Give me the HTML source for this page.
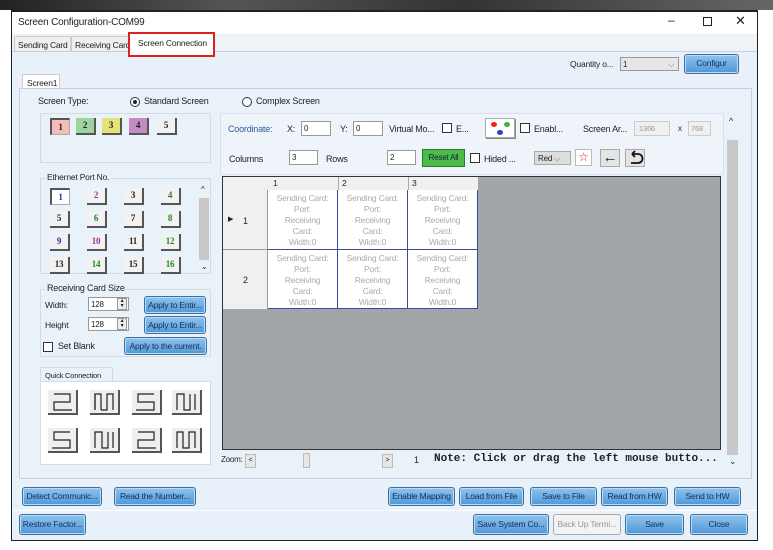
<!DOCTYPE html>
<html><head><meta charset="utf-8"><style>
*{box-sizing:border-box;margin:0;padding:0}
body{width:773px;height:550px;background:#fff;font-family:"Liberation Sans",sans-serif;font-size:9px;color:#222;position:relative;overflow:hidden;letter-spacing:-0.2px}
.a{position:absolute}
.win{left:11px;top:10px;width:747px;height:531px;border:1px solid #222;border-top:2px solid #222;background:#e8f1f9}
.btn{position:absolute;height:19px;border:1px solid #3f6f9f;border-radius:3px;background:linear-gradient(#8fc3ee,#4f97d8);color:#12305a;font-size:8.5px;text-align:center;line-height:17px;white-space:nowrap;overflow:hidden;box-shadow:inset 0 0 0 1px #b8dcf7}
.box{position:absolute;border:1px solid #d3dbe3;background:#eaf2f9}
.nb{position:absolute;width:20px;height:17px;background:#f2f2f2;border-right:2px solid #555;border-bottom:2px solid #555;font:bold 9px "Liberation Serif",serif;text-align:center;line-height:15px}
.inp{position:absolute;height:15px;background:#fff;border:1px solid #999;font-size:8px;padding-left:2px;line-height:13px}
.cell{position:absolute;width:70px;height:60px;background:#fff;color:#aaa;font-size:8.5px;text-align:center;line-height:11px;padding-top:3px;border-right:1px solid #3a4aa0;border-bottom:1px solid #3a4aa0}
.chk{position:absolute;width:10px;height:10px;border:1px solid #333;background:#fff}
</style></head><body>
<div class="a" style="left:0;top:0;width:773px;height:10px;background:linear-gradient(90deg,#222,#555 30%,#333 60%,#666)"></div>
<div class="a win"></div>
<div class="a" style="left:12px;top:12px;width:745px;height:22px;background:#fff"></div>
<div class="a" style="left:18px;top:17px;font-size:10px">Screen Configuration-COM99</div>
<div class="a" style="left:668px;top:13px;font-size:12px">–</div>
<div class="a" style="left:703px;top:17px;width:9px;height:9px;border:1px solid #222"></div>
<div class="a" style="left:735px;top:13px;font-size:13px">✕</div>
<div class="a" style="left:12px;top:35px;width:745px;height:17px;background:#eef3f8;border-bottom:1px solid #ccd"></div>
<div class="a" style="left:14px;top:36px;width:57px;height:16px;border:1px solid #ccc;background:#f0f0f0;font-size:8.5px;padding:3px 0 0 3px">Sending Card</div>
<div class="a" style="left:71px;top:36px;width:58px;height:16px;border:1px solid #ccc;background:#f0f0f0;font-size:8.5px;padding:3px 0 0 3px;overflow:hidden;white-space:nowrap">Receiving Card</div>
<div class="a" style="left:128px;top:32px;width:87px;height:25px;border:2px solid #e02020;background:#fff;font-size:8.5px;padding:4px 0 0 8px">Screen Connection</div>
<div class="a" style="left:570px;top:59px;font-size:8.5px">Quantity o...</div>
<div class="inp" style="left:620px;top:57px;width:59px;height:14px;background:#e6e6e6">1<span style="position:absolute;right:4px;color:#777">⌵</span></div>
<div class="btn" style="left:684px;top:54px;width:55px;height:20px">Configur</div>
<div class="a" style="left:22px;top:74px;width:38px;height:15px;background:#fff;border:1px solid #ccd;border-bottom:none;font-size:8.5px;padding:3px 0 0 4px">Screen1</div>
<div class="a" style="left:19px;top:88px;width:733px;height:391px;border:1px solid #ccd;background:#eaf2f9"></div>
<div class="a" style="left:38px;top:96px;font-size:9px">Screen Type:</div>
<div class="a" style="left:130px;top:97px;width:10px;height:10px;border:1px solid #333;border-radius:50%;background:#fff"><div class="a" style="left:2px;top:2px;width:4px;height:4px;border-radius:50%;background:#222"></div></div>
<div class="a" style="left:144px;top:96px;font-size:9px">Standard Screen</div>
<div class="a" style="left:242px;top:97px;width:10px;height:10px;border:1px solid #333;border-radius:50%;background:#fff"></div>
<div class="a" style="left:256px;top:96px;font-size:9px">Complex Screen</div>
<div class="box" style="left:40px;top:113px;width:171px;height:50px"></div>
<div class="nb" style="left:50px;top:118px;background:#f6bcbc;border-left:2px solid #555;border-top:2px solid #555;border-right:1px solid #aaa;border-bottom:1px solid #aaa">1</div>
<div class="nb" style="left:76px;top:118px;background:#9dd49d">2</div>
<div class="nb" style="left:102px;top:118px;background:#e6e27a">3</div>
<div class="nb" style="left:129px;top:118px;background:#c48ac4">4</div>
<div class="nb" style="left:157px;top:118px;background:#eef2f4">5</div>
<div class="box" style="left:40px;top:178px;width:171px;height:96px"></div>
<div class="a" style="left:45px;top:172px;background:#eaf2f9;padding:0 2px;font-size:8.5px">Ethernet Port No.</div>
<div class="nb" style="left:50px;top:188px;background:#fff;color:#33a;border-left:2px solid #555;border-top:2px solid #555;border-right:1px solid #aaa;border-bottom:1px solid #aaa">1</div>
<div class="nb" style="left:87px;top:188px;color:#939">2</div>
<div class="nb" style="left:124px;top:188px">3</div>
<div class="nb" style="left:161px;top:188px;color:#282">4</div>
<div class="nb" style="left:50px;top:211px">5</div>
<div class="nb" style="left:87px;top:211px;color:#282">6</div>
<div class="nb" style="left:124px;top:211px">7</div>
<div class="nb" style="left:161px;top:211px;color:#282">8</div>
<div class="nb" style="left:50px;top:234px;color:#33a">9</div>
<div class="nb" style="left:87px;top:234px;color:#939">10</div>
<div class="nb" style="left:124px;top:234px">11</div>
<div class="nb" style="left:161px;top:234px;color:#282">12</div>
<div class="nb" style="left:50px;top:257px">13</div>
<div class="nb" style="left:87px;top:257px;color:#282">14</div>
<div class="nb" style="left:124px;top:257px">15</div>
<div class="nb" style="left:161px;top:257px;color:#282">16</div>
<div class="a" style="left:199px;top:198px;width:10px;height:62px;background:#c8c8c8"></div>
<div class="a" style="left:201px;top:185px;font-size:8px">^</div>
<div class="a" style="left:201px;top:262px;font-size:8px">⌄</div>
<div class="box" style="left:40px;top:289px;width:171px;height:68px"></div>
<div class="a" style="left:45px;top:283px;background:#eaf2f9;padding:0 2px;font-size:9px">Receiving Card Size</div>
<div class="a" style="left:45px;top:300px;font-size:8.5px">Width:</div>
<div class="a" style="left:45px;top:320px;font-size:8.5px">Height</div>
<div class="inp" style="left:88px;top:297px;width:41px;height:14px">128</div>
<div class="inp" style="left:88px;top:317px;width:41px;height:14px">128</div>
<div class="a" style="left:117px;top:298px;width:10px;height:12px;background:#eee;border:1px solid #999;font-size:6px;text-align:center;line-height:5px">▴<br>▾</div>
<div class="a" style="left:117px;top:318px;width:10px;height:12px;background:#eee;border:1px solid #999;font-size:6px;text-align:center;line-height:5px">▴<br>▾</div>
<div class="btn" style="left:144px;top:296px;width:62px;height:18px;line-height:16px">Apply to Entir...</div>
<div class="btn" style="left:144px;top:316px;width:62px;height:18px;line-height:16px">Apply to Entir...</div>
<div class="chk" style="left:43px;top:342px"></div>
<div class="a" style="left:58px;top:341px;font-size:9px">Set Blank</div>
<div class="btn" style="left:124px;top:337px;width:83px;height:18px;line-height:16px">Apply to the current.</div>
<div class="a" style="left:40px;top:367px;width:73px;height:14px;background:#eaf2f9;border:1px solid #d3dbe3;border-bottom:none;font-size:7.5px;padding:3px 0 0 4px">Quick Connection</div>
<div class="a" style="left:40px;top:381px;width:171px;height:84px;background:#fff;border:1px solid #d3dbe3"></div>
<svg class="a" style="left:48px;top:390px" width="160" height="70" viewBox="0 0 160 70" fill="none" stroke="#222" stroke-width="1.2">
<defs><g id="bg"><rect x="0" y="0" width="30" height="24" fill="#eee" stroke="none"/><path d="M29 0V24H0" stroke="#555" stroke-width="2"/></g></defs>
<g><use href="#bg"/><path d="M6 4H22V12H6V20H24"/></g>
<g transform="translate(42,0)"><use href="#bg"/><path d="M5 20V4H11V20M11 20H17V4H23V20"/><path d="M5 4V20"/></g>
<g transform="translate(84,0)"><use href="#bg"/><path d="M22 4H6V12H22V20H4"/></g>
<g transform="translate(124,0)"><use href="#bg"/><path d="M5 20V4H12V20H18V4M23 4V20"/></g>
<g transform="translate(0,38)"><use href="#bg"/><path d="M22 4H6V12H22V20H4"/></g>
<g transform="translate(42,38)"><use href="#bg"/><path d="M5 20V4H12V20H18V4M23 4V20"/></g>
<g transform="translate(84,38)"><use href="#bg"/><path d="M6 4H22V12H6V20H24"/></g>
<g transform="translate(124,38)"><use href="#bg"/><path d="M5 20V4H11V20H17V4H23V20"/></g>
</svg>
<div class="a" style="left:220px;top:113px;width:504px;height:62px;background:#eef4fa;border:1px solid #dde"></div>
<div class="a" style="left:228px;top:124px;font-size:9px;color:#2a5d9a">Coordinate:</div>
<div class="a" style="left:287px;top:124px;font-size:9px">X:</div>
<div class="inp" style="left:301px;top:121px;width:30px">0</div>
<div class="a" style="left:340px;top:124px;font-size:9px">Y:</div>
<div class="inp" style="left:353px;top:121px;width:30px">0</div>
<div class="a" style="left:389px;top:124px;font-size:9px">Virtual Mo...</div>
<div class="chk" style="left:442px;top:123px"></div>
<div class="a" style="left:456px;top:124px;font-size:9px">E...</div>
<div class="a" style="left:485px;top:118px;width:30px;height:20px;background:#fff;border:1px solid #aaa;box-shadow:1px 1px 0 #888"><div class="a" style="left:5px;top:3px;width:6px;height:5px;border-radius:50%;background:#e22"></div><div class="a" style="left:18px;top:3px;width:6px;height:5px;border-radius:50%;background:#3b3"></div><div class="a" style="left:11px;top:11px;width:6px;height:5px;border-radius:50%;background:#24b"></div></div>
<div class="chk" style="left:520px;top:123px"></div>
<div class="a" style="left:534px;top:124px;font-size:9px">Enabl...</div>
<div class="a" style="left:583px;top:124px;font-size:9px">Screen Ar...</div>
<div class="inp" style="left:634px;top:121px;width:36px;background:#f0f0f0;color:#999;border-color:#ccc;font-size:7.5px;padding-left:4px">1366</div>
<div class="a" style="left:678px;top:124px;font-size:8px">x</div>
<div class="inp" style="left:688px;top:121px;width:23px;background:#f0f0f0;color:#999;border-color:#ccc;font-size:7.5px">768</div>
<div class="a" style="left:229px;top:154px;font-size:9px">Columns</div>
<div class="inp" style="left:289px;top:150px;width:29px">3</div>
<div class="a" style="left:326px;top:154px;font-size:9px">Rows</div>
<div class="inp" style="left:387px;top:150px;width:29px">2</div>
<div class="a" style="left:422px;top:149px;width:43px;height:18px;background:#4cbb4c;border:1px solid #2a7a2a;font-size:8px;text-align:center;line-height:16px;color:#123">Reset All</div>
<div class="chk" style="left:470px;top:153px"></div>
<div class="a" style="left:484px;top:154px;font-size:9px">Hided ...</div>
<div class="a" style="left:534px;top:151px;width:37px;height:14px;background:#ddd;border:1px solid #aaa;font-size:8px;padding:2px 0 0 3px">Red <span style="color:#777">⌵</span></div>
<div class="a" style="left:575px;top:149px;width:17px;height:17px;background:#fff;border:1px solid #bbb;color:#d22;font-size:12px;text-align:center;line-height:15px">☆</div>
<div class="a" style="left:600px;top:149px;width:20px;height:18px;background:#e4e4e4;border:1px solid #aaa;font-size:15px;text-align:center;line-height:15px">←</div>
<div class="a" style="left:625px;top:149px;width:20px;height:18px;background:#e4e4e4;border:1px solid #aaa"><svg width="18" height="16"><path d="M6 4H12A4 4 0 0 1 12 13H5M6 4l3-3M6 4l3 3" stroke="#111" stroke-width="1.8" fill="none"/></svg></div>
<div class="a" style="left:222px;top:176px;width:499px;height:274px;background:#a3a6a8;border:1px solid #333"></div>
<div class="a" style="left:223px;top:177px;width:255px;height:13px;background:#f0f0f0"></div>
<div class="a" style="left:223px;top:190px;width:45px;height:119px;background:#f0f0f0;border-right:1px solid #999"></div>
<div class="a" style="left:223px;top:249px;width:45px;height:1px;background:#999"></div>
<div class="a" style="left:273px;top:178px;font-size:8.5px">1</div>
<div class="a" style="left:342px;top:178px;font-size:8.5px">2</div>
<div class="a" style="left:412px;top:178px;font-size:8.5px">3</div>
<div class="a" style="left:338px;top:177px;width:1px;height:13px;background:#aaa"></div>
<div class="a" style="left:408px;top:177px;width:1px;height:13px;background:#aaa"></div>
<div class="a" style="left:228px;top:215px;font-size:7px">▶</div>
<div class="a" style="left:243px;top:216px;font-size:9px">1</div>
<div class="a" style="left:243px;top:275px;font-size:9px">2</div>
<div class="cell" style="left:268px;top:190px">Sending Card:<br>Port:<br>Receiving<br>Card:<br>Width:0</div>
<div class="cell" style="left:338px;top:190px">Sending Card:<br>Port:<br>Receiving<br>Card:<br>Width:0</div>
<div class="cell" style="left:408px;top:190px">Sending Card:<br>Port:<br>Receiving<br>Card:<br>Width:0</div>
<div class="cell" style="left:268px;top:250px;height:59px">Sending Card:<br>Port:<br>Receiving<br>Card:<br>Width:0</div>
<div class="cell" style="left:338px;top:250px;height:59px">Sending Card:<br>Port:<br>Receiving<br>Card:<br>Width:0</div>
<div class="cell" style="left:408px;top:250px;height:59px">Sending Card:<br>Port:<br>Receiving<br>Card:<br>Width:0</div>
<div class="a" style="left:727px;top:140px;width:11px;height:315px;background:#c8c8c8"></div>
<div class="a" style="left:729px;top:116px;font-size:9px">^</div>
<div class="a" style="left:729px;top:456px;font-size:9px">⌄</div>
<div class="a" style="left:221px;top:455px;font-size:8px">Zoom:</div>
<div class="a" style="left:245px;top:454px;width:11px;height:14px;background:#e6e6e6;border:1px solid #bbb;font-size:7px;text-align:center;line-height:12px">&lt;</div>
<div class="a" style="left:303px;top:453px;width:7px;height:15px;background:#e6e6e6;border:1px solid #bbb"></div>
<div class="a" style="left:382px;top:454px;width:11px;height:14px;background:#e6e6e6;border:1px solid #bbb;font-size:7px;text-align:center;line-height:12px">&gt;</div>
<div class="a" style="left:414px;top:455px;font-size:9px">1</div>
<div class="a" style="left:434px;top:453px;font:bold 11px 'Liberation Mono',monospace;letter-spacing:0">Note: Click or drag the left mouse butto...</div>
<div class="btn" style="left:22px;top:487px;width:80px">Detect Communic...</div>
<div class="btn" style="left:114px;top:487px;width:82px">Read the Number...</div>
<div class="btn" style="left:388px;top:487px;width:67px">Enable Mapping</div>
<div class="btn" style="left:459px;top:487px;width:65px">Load from File</div>
<div class="btn" style="left:530px;top:487px;width:67px">Save to File</div>
<div class="btn" style="left:601px;top:487px;width:67px">Read from HW</div>
<div class="btn" style="left:674px;top:487px;width:67px">Send to HW</div>
<div class="a" style="left:12px;top:510px;width:745px;height:1px;background:#fff"></div>
<div class="btn" style="left:19px;top:514px;width:67px;height:21px;line-height:19px">Restore Factor...</div>
<div class="btn" style="left:473px;top:514px;width:76px;height:21px;line-height:19px">Save System Co...</div>
<div class="btn" style="left:553px;top:514px;width:68px;height:21px;line-height:19px;background:#f3f3f3;color:#999;border-color:#aaa;box-shadow:none">Back Up Termi...</div>
<div class="btn" style="left:625px;top:514px;width:59px;height:21px;line-height:19px">Save</div>
<div class="btn" style="left:690px;top:514px;width:58px;height:21px;line-height:19px">Close</div>
</body></html>
